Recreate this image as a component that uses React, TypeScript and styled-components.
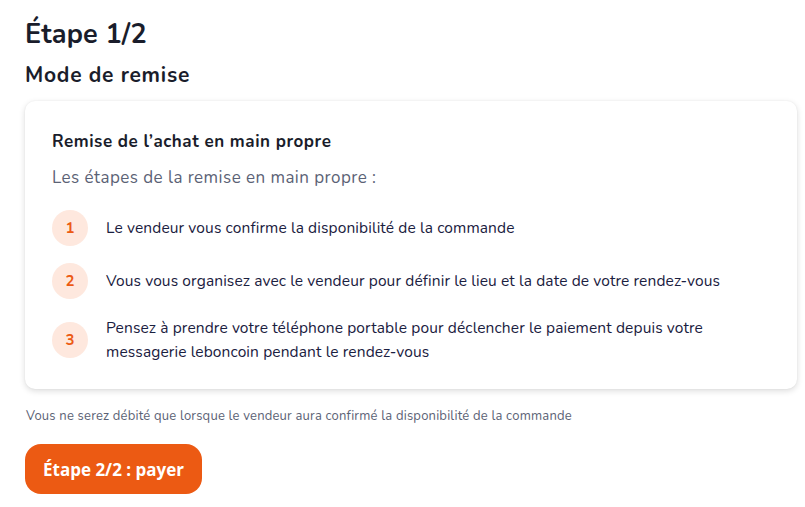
import React from "react";
import styled, { createGlobalStyle } from "styled-components";

const Global = createGlobalStyle`
  html, body { margin: 0; padding: 0; background: #ffffff; }
  body { font-family: "Nunito", "Lato", "Noto Sans", sans-serif; color: #1a1d2b; }
  * { box-sizing: border-box; }
`;

const Page = styled.main`
  padding: 17px 8px 0 25px;
  display: flex;
  flex-direction: column;
  align-items: flex-start;
`;

const Title = styled.h1`
  margin: 0;
  font-size: 27px;
  line-height: 36px;
  font-weight: 700;
  letter-spacing: 0.2px;
  color: #1a1d2b;
`;

const Subtitle = styled.h2`
  margin: 8px 0 0;
  font-size: 21px;
  line-height: 28px;
  font-weight: 700;
  letter-spacing: 0.75px;
  color: #1a1d2b;
`;

const Card = styled.section`
  margin-top: 12px;
  align-self: stretch;
  background: #ffffff;
  border-radius: 10px;
  box-shadow: 0 2px 6px rgba(0, 0, 0, 0.14), 0 0 2px rgba(0, 0, 0, 0.06);
  padding: 30px 27px 25px;
  display: flex;
  flex-direction: column;
`;

const CardTitle = styled.h3`
  margin: 0;
  font-size: 17px;
  line-height: 22px;
  font-weight: 700;
  letter-spacing: 0.55px;
  color: #1a1d2b;
`;

const Lead = styled.p`
  margin: 14px 0 0;
  font-size: 17px;
  line-height: 22px;
  letter-spacing: 0.45px;
  color: #5b6275;
`;

const Steps = styled.ol`
  list-style: none;
  margin: 21px 0 0;
  padding: 0;
  display: flex;
  flex-direction: column;
  gap: 17px;
`;

const Step = styled.li`
  display: flex;
  align-items: center;
  gap: 18px;
`;

const Badge = styled.span`
  flex: 0 0 36px;
  width: 36px;
  height: 36px;
  border-radius: 50%;
  background: #fee8de;
  color: #ec5a13;
  font-size: 15px;
  font-weight: 700;
  display: flex;
  align-items: center;
  justify-content: center;
`;

const StepText = styled.span`
  font-size: 15.5px;
  line-height: 24px;
  letter-spacing: 0.12px;
  color: #1a2040;
`;

const Note = styled.p`
  margin: 19px 0 0 1px;
  font-size: 13px;
  line-height: 16px;
  letter-spacing: 0.2px;
  color: #5b6275;
`;

const PrimaryButton = styled.button`
  margin-top: 20px;
  height: 50px;
  padding: 0 18px;
  border: none;
  border-radius: 16px;
  background: #ec5a13;
  color: #ffffff;
  font-family: "Open Sans", "Noto Sans", sans-serif;
  font-size: 17px;
  font-weight: 700;
  cursor: pointer;
`;

const steps = [
  "Le vendeur vous confirme la disponibilité de la commande",
  "Vous vous organisez avec le vendeur pour définir le lieu et la date de votre rendez-vous",
  "Pensez à prendre votre téléphone portable pour déclencher le paiement depuis votre messagerie leboncoin pendant le rendez-vous",
];

export default function App() {
  return (
    <>
      <Global />
      <Page>
        <Title>Étape 1/2</Title>
        <Subtitle>Mode de remise</Subtitle>
        <Card>
          <CardTitle>Remise de l’achat en main propre</CardTitle>
          <Lead>Les étapes de la remise en main propre :</Lead>
          <Steps>
            {steps.map((s, i) => (
              <Step key={i}>
                <Badge>{i + 1}</Badge>
                <StepText>{s}</StepText>
              </Step>
            ))}
          </Steps>
        </Card>
        <Note>Vous ne serez débité que lorsque le vendeur aura confirmé la disponibilité de la commande</Note>
        <PrimaryButton>Étape 2/2 : payer</PrimaryButton>
      </Page>
    </>
  );
}
